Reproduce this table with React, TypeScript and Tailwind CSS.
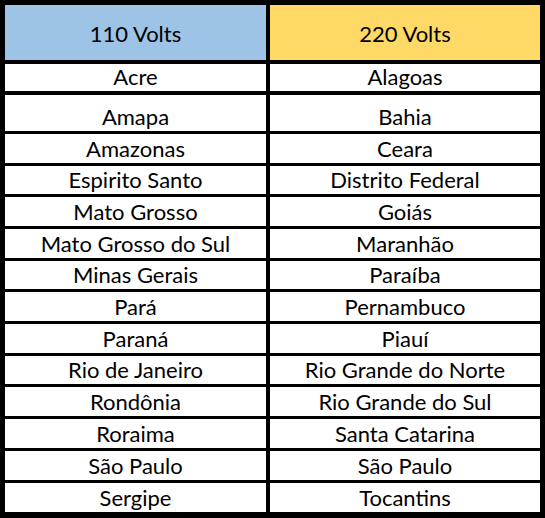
const ROWS: { left: string; right: string; h: string; gap: string }[] = [
  { left: 'Acre', right: 'Alagoas', h: 'h-[27px]', gap: 'mt-[4px]' },
  { left: 'Amapa', right: 'Bahia', h: 'h-[36px]', gap: 'mt-[4px]' },
  { left: 'Amazonas', right: 'Ceara', h: 'h-[29px]', gap: 'mt-[3px]' },
  { left: 'Espirito Santo', right: 'Distrito Federal', h: 'h-[28px]', gap: 'mt-[3px]' },
  { left: 'Mato Grosso', right: 'Goiás', h: 'h-[29px]', gap: 'mt-[3px]' },
  { left: 'Mato Grosso do Sul', right: 'Maranhão', h: 'h-[29px]', gap: 'mt-[3px]' },
  { left: 'Minas Gerais', right: 'Paraíba', h: 'h-[28px]', gap: 'mt-[3px]' },
  { left: 'Pará', right: 'Pernambuco', h: 'h-[29px]', gap: 'mt-[3px]' },
  { left: 'Paraná', right: 'Piauí', h: 'h-[29px]', gap: 'mt-[3px]' },
  { left: 'Rio de Janeiro', right: 'Rio Grande do Norte', h: 'h-[28px]', gap: 'mt-[3px]' },
  { left: 'Rondônia', right: 'Rio Grande do Sul', h: 'h-[29px]', gap: 'mt-[3px]' },
  { left: 'Roraima', right: 'Santa Catarina', h: 'h-[29px]', gap: 'mt-[3px]' },
  { left: 'São Paulo', right: 'São Paulo', h: 'h-[29px]', gap: 'mt-[3px]' },
  { left: 'Sergipe', right: 'Tocantins', h: 'h-[29px]', gap: 'mt-[3px]' },
];

function Cell({ text, h }: { text: string; h: string }) {
  return (
    <div className={`${h} bg-white flex items-end justify-center`}>
      <span className="leading-[24px] pb-[2px]">{text}</span>
    </div>
  );
}

export default function App() {
  return (
    <div
      className="w-[545px] h-[518px] bg-black pt-[5px] px-[5px] pb-[6px] flex flex-col text-[22px] text-black"
      style={{ fontFamily: 'Lato, "Open Sans", sans-serif' }}
    >
      <div className="grid grid-cols-[261px_270px] gap-x-[4px]">
        <div className="h-[55px] bg-[#9dc3e6] flex items-center justify-center pt-[2px]">110 Volts</div>
        <div className="h-[55px] bg-[#ffd966] flex items-center justify-center pt-[2px]">220 Volts</div>
      </div>
      {ROWS.map((r) => (
        <div key={r.left + r.right} className={`grid grid-cols-[261px_270px] gap-x-[4px] ${r.gap}`}>
          <Cell text={r.left} h={r.h} />
          <Cell text={r.right} h={r.h} />
        </div>
      ))}
    </div>
  );
}
